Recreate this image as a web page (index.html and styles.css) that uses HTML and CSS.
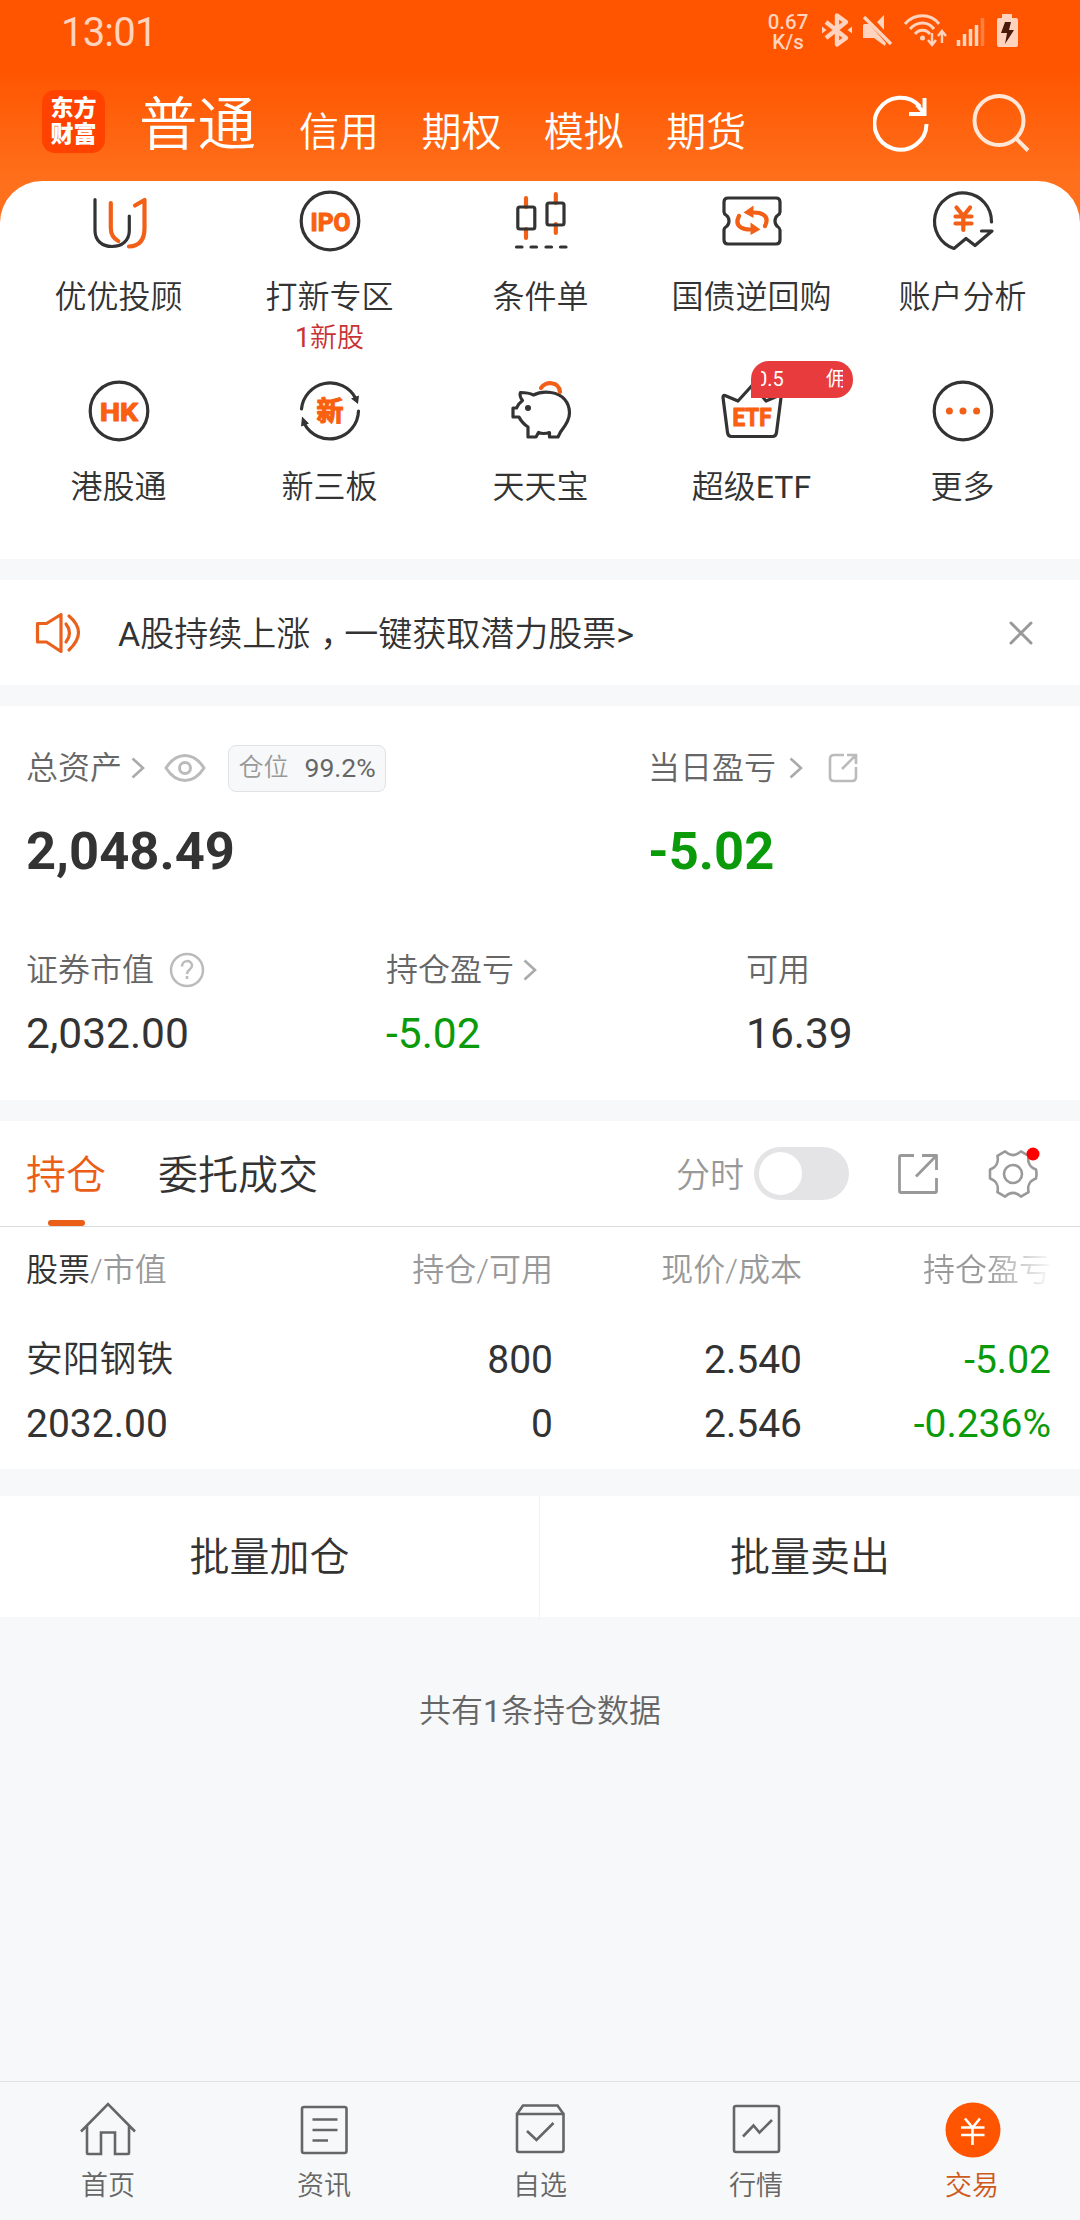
FILE: index.html
```html
<!DOCTYPE html>
<html lang="zh-CN">
<head>
<meta charset="utf-8">
<title>东方财富 - 交易</title>
<link rel="stylesheet" href="styles.css">
</head>
<body>
<div class="app">
  <header class="top">
    <div class="status">
      <span class="clock">13:01</span>
      <div class="status-right">
        <div class="speed"><span>0.67</span><span>K/s</span></div>
        <svg class="st-icons" width="200" height="36" viewBox="0 0 200 36" fill="none" stroke="#ffd3bd">
          <path d="M6 10 26 26 17 32.500V3.500L26 10 6 26" stroke-width="4.400" stroke-linejoin="round"/>
          <path d="M2 14.500v7l4.500-3.500zM32 14.500v7l-4.500-3.500z" fill="#ffd3bd" stroke="none"/>
          <path d="M44 12h5l17 19-1 3-11-8H43V13zM57 10l7-7v15z" fill="#ffd3bd" stroke="none"/>
          <path d="M44 5 71 32" stroke-width="3.400"/>
          <path d="M85 12c9-11 26-11 34 0M90 17c7-8 18-8 24 0M95 22c4-5 11-5 15 0" stroke-width="3"/>
          <circle cx="102.500" cy="26" r="2.500" fill="#ffd3bd" stroke="none"/>
          <path d="M112 21v11m-4-4 4 5 4-5M122 31V20m-4 4 4-5 4 5" stroke-width="2.400"/>
          <path d="M138.500 28v6M144.500 22v12M150.500 17v17M156.500 13v21" stroke-width="3.500"/>
          <path d="M162.500 6v28" stroke-width="3.500" opacity=".35"/>
          <path d="M182 2h10v4h4q2 0 2 2v25q0 2-2 2h-17q-2 0-2-2V8q0-2 2-2h3z" fill="#ffd3bd" stroke="none"/>
          <path d="M185 10h6l-2 8h5l-9 14 2-11h-6z" fill="#4a1a0a" stroke="none"/>
        </svg>
      </div>
    </div>
    <nav class="head">
      <div class="logo"><span>东方</span><span>财富</span></div>
      <span class="head-main">普通</span>
      <div class="head-tabs"><span>信用</span><span>期权</span><span>模拟</span><span>期货</span></div>
      <svg class="head-ico" width="166" height="64" viewBox="0 0 166 64" fill="none" stroke="#fff">
        <path d="M53.500 33a26 26 0 1 1-6.500-17.500" stroke-width="4"/>
        <path d="M36 23h15.500V7M44 14l7 8" stroke-width="4"/>
        <g stroke="#ffe6d6" stroke-width="4"><circle cx="126" cy="29.500" r="24.500"/><path d="M142.500 47l12.500 12.500"/></g>
      </svg>
    </nav>
  </header>

  <main>
    <section class="menu">
      <div class="item">
        <svg class="ico" viewBox="0 0 64 64"><path d="M8 10.500v31c0 10 7 16 17 16s17.300-6 17.300-16V27"/><path class="o w4" d="M23.800 14v25q0 9 7.500 13M48 16.500l9.500-5.500v28q0 18-15.500 18.500"/></svg>
        <span class="name">优优投顾</span>
      </div>
      <div class="item">
        <svg class="ico" viewBox="0 0 64 64"><circle cx="32" cy="32" r="28.800"/><text x="12.500" y="41.500" textLength="40" lengthAdjust="spacingAndGlyphs">IPO</text></svg>
        <span class="name">打新专区</span><span class="sub"><b>1</b>新股</span>
      </div>
      <div class="item">
        <svg class="ico" viewBox="0 0 64 64"><path class="o w4" d="M17 9v9M17 40v9M46.800 5v9M46.800 35v9"/><rect x="8.800" y="18" width="17" height="22" rx="2"/><rect x="38" y="14" width="17" height="22" rx="2"/><path d="M7.500 58h5.500M22 58h5.500M37 58h5.500M51.500 58H57"/></svg>
        <span class="name">条件单</span>
      </div>
      <div class="item">
        <svg class="ico" viewBox="0 0 64 64"><path d="M8 9h48q4 0 4 4v10q0 2-2.500 3.500Q55 28.500 55 32t2.500 5.500Q60 39 60 41v10q0 4-4 4H8q-4 0-4-4V41q0-2 2.500-3.500Q9 35.500 9 32t-2.500-5.500Q4 25 4 23V13q0-4 4-4z"/><path class="o w4" d="M45 37q4-8-2-11.500-3-2-9-2M19 27q-4 8 2 11.500 3 2 9 2"/><path class="of" d="M23.500 23.500l10-7v12.500zM40.500 40.500l-10-7v12.500z"/></svg>
        <span class="name">国债逆回购</span>
      </div>
      <div class="item">
        <svg class="ico" viewBox="0 0 64 64"><path d="M60.500 33A28.500 28.500 0 1 0 23 59.500l12-10 9 7L61 42H50.500"/><path class="o w4" d="M25.500 18.500l6.800 8.500 6.800-8.500M24.500 27.500h16M24.500 34.500h16M32.300 27v14"/></svg>
        <span class="name">账户分析</span>
      </div>
      <div class="item">
        <svg class="ico" viewBox="0 0 64 64"><circle cx="32" cy="32" r="28.800"/><text x="13" y="41.500" textLength="38" lengthAdjust="spacingAndGlyphs">HK</text></svg>
        <span class="name">港股通</span>
      </div>
      <div class="item">
        <svg class="ico" viewBox="0 0 64 64"><path d="M3.500 30A28.800 28.800 0 0 1 57.500 19M60.500 32A28.800 28.800 0 0 1 6.500 45"/><path class="df" d="M53 19.500l8-3-1 8.500zM11 44.500l-8 3 1-10z"/><text class="cjk" x="18.500" y="41.500">新</text></svg>
        <span class="name">新三板</span>
      </div>
      <div class="item">
        <svg class="ico" viewBox="0 0 64 64"><path d="M11.500 13.500q8 0 13 2.500Q32 12 42 13.500C54 15 60.500 24 60.500 34c0 8-6 15-9 19l-2.500 5H40.500v-4.500q-6 2-11 0L27 58h-8V48q-6-4-9-10H4v-9h3.500q2.500-5 6-7.500Q10 17 11.500 13.500z"/><circle class="df" cx="19" cy="29" r="3"/><path class="o w4" d="M32 9c4-7 18-7 19 4"/></svg>
        <span class="name">天天宝</span>
      </div>
      <div class="item">
        <svg class="ico" viewBox="0 0 64 64"><path d="M18 22L5 16.500q-2-.5-2 2l4.500 35q.5 4 4 4h41q3.500 0 4-4l4.500-35q0-2.500-2-2L46 22 32.500 6z"/><text x="12.500" y="46.800" textLength="39" lengthAdjust="spacingAndGlyphs">ETF</text></svg>
        <span class="badge"><span class="ticker"><span>0.5</span><span class="yong">佣</span></span></span>
        <span class="name">超级<b>ETF</b></span>
      </div>
      <div class="item">
        <svg class="ico" viewBox="0 0 64 64"><circle cx="32" cy="32" r="28.800"/><circle class="of" cx="18.400" cy="32" r="3.500"/><circle class="of" cx="32" cy="32" r="3.500"/><circle class="of" cx="45.600" cy="32" r="3.500"/></svg>
        <span class="name">更多</span>
      </div>
    </section>

    <section class="notice">
      <svg width="48" height="44" viewBox="0 0 48 44" fill="none" stroke="#e9611c" stroke-width="3.200" stroke-linejoin="round" stroke-linecap="round"><path d="M3.500 12.500h9L27 3.500v37L12.500 31h-9zM32 13q7 9 0 18M35 5q19 16 0 34"/></svg>
      <p><b>A</b>股持续上涨<span class="comma">，</span>一键获取潜力股票<b>&gt;</b></p>
      <svg width="26" height="26" viewBox="0 0 26 26" fill="none" stroke="#999" stroke-width="3" stroke-linecap="round"><path d="M3 3l20 20M23 3L3 23"/></svg>
    </section>

    <section class="assets">
      <div class="row total">
        <div class="cell">
          <div class="label">总资产
            <svg class="chev" viewBox="0 0 16 24"><path d="M2.500 2.500L13 12 2.500 21.500"/></svg>
            <svg class="eye" width="42" height="30" viewBox="0 0 42 30" fill="none" stroke="#bbb" stroke-width="3"><path d="M2 15Q10 2.500 21 2.500T40 15Q32 27.500 21 27.500T2 15z"/><circle cx="21" cy="15" r="5.500"/></svg>
            <span class="pos"><span>仓位</span><b>99.2%</b></span>
          </div>
          <div class="big">2,048.49</div>
        </div>
        <div class="cell">
          <div class="label">当日盈亏
            <svg class="chev far" viewBox="0 0 16 24"><path d="M2.500 2.500L13 12 2.500 21.500"/></svg>
            <svg class="open" width="32" height="32" viewBox="0 0 32 32" fill="none" stroke="#bbb" stroke-width="2.600"><path d="M17 3H7Q3 3 3 7v18q0 4 4 4h18q4 0 4-4V15M20 3h9v9M29 3L15 17"/></svg>
          </div>
          <div class="big green">-5.02</div>
        </div>
      </div>
      <div class="row parts">
        <div class="cell">
          <div class="label">证券市值
            <svg class="help" width="36" height="36" viewBox="0 0 36 36" fill="none" stroke="#bbb" stroke-width="2.500"><circle cx="18" cy="18" r="16"/><path d="M13 14.500c0-7 10-7 10-1 0 4-5 4-5 8.500M18 24v3"/></svg>
          </div>
          <div class="mid">2,032.00</div>
        </div>
        <div class="cell">
          <div class="label">持仓盈亏<svg class="chev near" viewBox="0 0 16 24"><path d="M2.500 2.500L13 12 2.500 21.500"/></svg></div>
          <div class="mid green">-5.02</div>
        </div>
        <div class="cell">
          <div class="label">可用</div>
          <div class="mid">16.39</div>
        </div>
      </div>
    </section>

    <section class="holdings">
      <div class="tabs">
        <span class="tab on">持仓</span>
        <span class="tab">委托成交</span>
        <span class="minute">分时</span>
        <span class="toggle"></span>
        <svg class="share" width="44" height="44" viewBox="0 0 44 44" fill="none" stroke="#999" stroke-width="2.800"><path d="M18 3.500H5Q3.500 3.500 3.500 5v34q0 1.500 1.500 1.500h34q1.500 0 1.500-1.500V26M26 3.500h14.500V18M40.500 3.500L20 24.500" stroke-linejoin="round"/></svg>
        <svg class="gear" width="58" height="54" viewBox="-27 -27 58 54" fill="none" stroke="#999" stroke-width="2.600" stroke-linejoin="round"><path d="M23-4.500Q24 0 23 4.500C17 6.500 14.100 11.500 15.600 18.100L7.900 22.600C2.900 18-2.900 18-7.900 22.600L-15.600 18.100C-14.100 11.500-17 6.500-23 4.500V-4.500C-17-6.500-14.100-11.500-15.600-18.100L-7.900-22.600C-2.900-18 2.900-18 7.900-22.600L15.600-18.100C14.100-11.500 17-6.500 23-4.500z"/><circle r="9"/><circle cx="20" cy="-20" r="6.500" fill="#f00" stroke="none"/></svg>
      </div>
      <div class="grid thead"><span><i>股票</i>/市值</span><span>持仓/可用</span><span>现价/成本</span><span class="fade">持仓盈亏</span></div>
      <div class="grid line first"><span class="stock">安阳钢铁</span><span>800</span><span>2.540</span><span class="green">-5.02</span></div>
      <div class="grid line"><span>2032.00</span><span>0</span><span>2.546</span><span class="green">-0.236%</span></div>
    </section>

    <section class="batch"><span>批量加仓</span><span>批量卖出</span></section>
    <p class="summary">共有<b>1</b>条持仓数据</p>
  </main>

  <nav class="tabbar">
    <div class="tb"><svg viewBox="0 0 60 60"><path d="M3 32.500L30 5l27 27.500M9 27v27q0 1 1 1h13V33.500h14V55h13q1 0 1-1V27"/></svg><span>首页</span></div>
    <div class="tb"><svg viewBox="0 0 60 60"><rect x="8" y="8" width="44.500" height="46" rx="2"/><path d="M18.500 20.500h25M18.500 31h25M18.500 41.500h15.500"/></svg><span>资讯</span></div>
    <div class="tb"><svg viewBox="0 0 60 60"><path d="M7 15l6-8.500h34.500L53.500 15M7 15h46.500v36q0 2-2 2H9q-2 0-2-2zM17 32l9.500 9L43.500 24"/></svg><span>自选</span></div>
    <div class="tb"><svg viewBox="0 0 60 60"><rect x="8" y="7" width="45" height="46" rx="2"/><path d="M17 37.500l10.500-11 6 7L46 21"/></svg><span>行情</span></div>
    <div class="tb active"><svg viewBox="0 0 60 60"><circle cx="31" cy="31" r="27.500" fill="#ff5500" stroke="none"/><path stroke="#fff" d="M23 19.500l7.500 9 7.500-9M19 28.500h23.500M19 36h23.500M30.500 28.500V46"/></svg><span>交易</span></div>
  </nav>
</div>
</body>
</html>
```
FILE: styles.css
```css
* { box-sizing: border-box; }
body {
  margin: 0;
  background: #f7f8fa;
  color: #333;
  font-family: Roboto, "Noto Sans CJK SC", sans-serif;
}
svg { display: block; flex: none; }
b { font-weight: 400; }
.app { width: 1080px; height: 2220px; display: flex; flex-direction: column; }

/* Chinese labels use the demi-light cut; latin inside them stays regular through <b> */
.head-main, .head-tabs, .name, .sub, .notice p, .label, .tab, .minute, .thead, .stock, .batch, .summary, .tb { font-weight: 350; }

/* header */
.top { height: 230px; flex: none; background: linear-gradient(#ff5500 70px, #ff701c 181px); color: #fff; }
.status { height: 66px; padding: 12px 60px 0 61px; display: flex; justify-content: space-between; }
.clock { font-size: 40px; line-height: 42px; letter-spacing: -0.8px; color: #ffd3bd; }
.status-right { display: flex; gap: 11px; }
.speed { display: flex; flex-direction: column; align-items: center; font-size: 20.500px; line-height: 20px; font-weight: 500; color: #ffd3bd; width: 42px; }
.head { height: 115px; padding: 0 42px; display: flex; align-items: center; }
.logo { width: 63px; height: 63px; margin-bottom: 4px; border-radius: 13px; background: #ff4200; display: flex; flex-direction: column; align-items: center; justify-content: center; font-size: 23px; line-height: 26px; font-weight: 900; }
.head-main { font-size: 58.500px; line-height: 64px; margin: 3px 0 0 34px; }
.head-tabs { margin: 18px 0 0 43px; display: flex; gap: 42.400px; font-size: 40px; line-height: 44px; }
.head-ico { margin: -2px -1px 0 auto; }

/* shortcut grid */
main { margin-top: -49px; flex: 1; position: relative; }
.menu { height: 378px; padding: 8px 12px 0 13px; border-radius: 42px 42px 0 0; background: #fff; display: grid; grid-template-columns: repeat(5, 211px); grid-auto-rows: 190px; }
.item { position: relative; display: flex; flex-direction: column; align-items: center; }
.ico { width: 64px; height: 64px; fill: none; stroke: #333; stroke-width: 3.200; stroke-linecap: round; stroke-linejoin: round; }
.ico .o { stroke: #f26018; }
.ico .w4 { stroke-width: 4.200; }
.ico .of { fill: #f26018; stroke: none; }
.ico .df { fill: #333; stroke: none; }
.ico text { font-size: 26.500px; font-weight: 700; fill: #f9600f; stroke: #f9600f; stroke-width: 1.200; }
.ico .cjk { font-size: 27px; }
.name { margin-top: 24px; font-size: 32px; line-height: 40px; }
.sub { margin-top: 4px; font-size: 27px; line-height: 34px; color: #c93232; }
.badge { position: absolute; left: 105px; top: -18px; width: 102px; height: 37px; padding: 0 10px; border-radius: 18px 18px 18px 0; background: #e83b3d; color: #fff; font-size: 20px; line-height: 36px; }
.ticker { display: flex; justify-content: space-between; overflow: hidden; }
.ticker > :first-child { margin-left: -5px; }
.yong { margin-right: -3px; }

/* notice */
.notice { height: 105px; margin-top: 21px; padding: 0 46px 0 34px; background: #fff; display: flex; align-items: center; }
.notice p { margin: 3px auto 0 36px; font-size: 34px; line-height: 44px; }
.comma { font-feature-settings: "halt"; padding: 0 7px 0 10px; }

/* assets */
.assets { height: 394px; margin-top: 21px; padding: 38px 0 0 26px; background: #fff; }
.row { display: flex; }
.cell { flex: none; }
.total .cell { width: 622px; }
.total .cell + .cell { width: auto; }
.parts .cell { width: 360px; }
.parts .cell:last-child { width: auto; }
.label { display: flex; align-items: center; height: 48px; font-size: 32px; line-height: 40px; color: #666; }
.chev { width: 16px; height: 24px; margin-left: 8px; fill: none; stroke: #aaa; stroke-width: 2.600; }
.chev.far { margin-left: 12px; }
.eye { margin-left: 18px; }
.open { margin-left: 23px; }
.help { margin-left: 15px; }
.pos { margin-left: 22px; height: 47px; width: 158px; border: 1px solid #e2e2e5; border-radius: 8px; background: #f7f8fa; display: flex; align-items: center; justify-content: center; gap: 16px; font-size: 25px; line-height: 32px; color: #999; }
.pos b { font-size: 26.500px; color: #666; }
.big { margin-top: 29px; font-size: 52.500px; line-height: 60px; font-weight: 700; }
.mid { margin-top: 14px; font-size: 42.500px; line-height: 52px; }
.parts { margin-top: 65px; }
.green { color: #0a9a0a; }

/* holdings */
.holdings { height: 348px; margin-top: 21px; background: #fff; }
.tabs { height: 106px; padding: 0 37px 0 26px; border-bottom: 1px solid #dcdcdc; display: flex; align-items: center; }
.tab { position: relative; font-size: 40px; line-height: 50px; margin-right: 52px; padding-top: 5px; }
.tab.on { color: #ea5e16; }
.tab.on::after { content: ""; position: absolute; left: 22px; bottom: -25px; width: 37px; height: 6px; border-radius: 3px; background: #ea5e16; }
.minute { margin-left: auto; padding-top: 3px; font-size: 34px; line-height: 40px; color: #999; }
.toggle { width: 95px; height: 53px; margin-left: 10px; padding: 5px; border-radius: 27px; background: #e4e4e6; }
.toggle::before { content: ""; display: block; width: 43px; height: 43px; border-radius: 50%; background: #fff; }
.share { margin-left: 47px; }
.gear { margin: 0 -1px 0 46px; }
.grid { display: grid; grid-template-columns: 327px 200px 249px 249px; padding-left: 26px; text-align: right; line-height: 50px; }
.grid > :first-child { text-align: left; }
.thead { margin-top: 18px; font-size: 32px; color: #999; }
.thead i { font-style: normal; color: #333; }
.fade { background: linear-gradient(90deg, #999 185px, #fff 252px); background-clip: text; -webkit-background-clip: text; color: transparent; }
.line { font-size: 39px; margin-top: 14px; }
.line.first { margin-top: 40px; }
.stock { font-size: 36.800px; }

.batch { height: 121px; margin-top: 27px; background: #fff; display: grid; grid-template-columns: 1fr 1fr; text-align: center; font-size: 40px; line-height: 124px; }
.batch > :first-child { border-right: 1px solid #f1f2f4; }
.summary { margin: 73px 0 0; text-align: center; font-size: 32px; line-height: 42px; color: #666; }

/* bottom bar */
.tabbar { height: 139px; flex: none; padding-top: 17px; border-top: 1px solid #e1e2e4; display: grid; grid-template-columns: repeat(5, 216px); }
.tb { display: flex; flex-direction: column; align-items: center; font-size: 27px; line-height: 36px; color: #666; }
.tb svg { width: 60px; height: 60px; fill: none; stroke: #666; stroke-width: 2.600; margin-bottom: 9px; }
.tb.active { color: #cf5a1c; }
```
